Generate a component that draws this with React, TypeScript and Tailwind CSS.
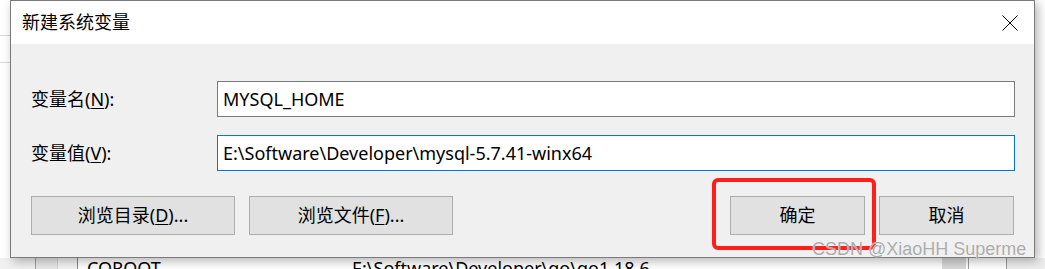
type FieldProps = {
  label: string;
  hotkey: string;
  value: string;
  focused?: boolean;
  className?: string;
};

function Field({ label, hotkey, value, focused, className }: FieldProps) {
  return (
    <div className={`flex h-[36px] items-center ${className ?? ""}`}>
      <div className="w-[186px] shrink-0">
        {label}(<u className="underline-offset-2">{hotkey}</u>):
      </div>
      <div
        className={`flex h-full flex-1 items-center border bg-white pl-[5px] ${
          focused ? "border-[#0078d7]" : "border-[#7a7a7a]"
        }`}
      >
        {value}
      </div>
    </div>
  );
}

function WinButton({ children, className }: { children: React.ReactNode; className?: string }) {
  return (
    <button
      type="button"
      className={`flex h-[39px] items-center justify-center border border-[#adadad] bg-[#e1e1e1] ${className ?? ""}`}
    >
      {children}
    </button>
  );
}

function Backdrop() {
  return (
    <>
      <div className="absolute left-0 top-[35px] h-px w-[10px] bg-[#d9d9d9]" />
      <div className="absolute left-0 top-[62px] h-px w-[10px] bg-[#d9d9d9]" />
      <div className="absolute inset-x-0 top-[258px] flex h-[11px]">
        <div className="w-[36px] border-r border-[#a0a0a0] bg-[#f0f0f0]" />
        <div className="w-[22px] border-r border-[#d4d4d4] bg-[#e9e9e9]" />
        <div className="w-[20px] border-r border-[#8a8a8a] bg-[#f4f4f4]" />
        <div className="flex flex-1 bg-white leading-none">
          <span className="w-[274px] pl-[9px] pt-[1px]">COROOT</span>
          <span className="flex-1 pt-[1px]">E:\Software\Developer\go\go1.18.6</span>
          <div className="w-[24px] bg-[#d9d9d9]" />
          <div className="ml-[2px] w-[39px] border-l border-r border-[#9a9a9a] bg-white" />
          <div className="w-[38px] bg-[#eeeeee]" />
        </div>
      </div>
    </>
  );
}

export default function App() {
  return (
    <div className="relative h-[269px] w-[1045px] overflow-hidden bg-white font-['Noto_Sans','Noto_Sans_CJK_SC',sans-serif] text-[18px] text-black">
      <Backdrop />

      <div className="absolute left-[10px] top-0 flex h-[258px] w-[1025px] flex-col border border-[#7a7a7a] shadow-[3px_3px_10px_rgba(0,0,0,0.3)]">
        <div className="flex h-[43px] items-center justify-between bg-white pl-[11px] pr-[16px]">
          <span>新建系统变量</span>
          <svg width="16" height="16" viewBox="0 0 16 16" aria-label="关闭">
            <path d="M0.5 0.5L15.5 15.5M15.5 0.5L0.5 15.5" stroke="#000" strokeWidth="1" fill="none" />
          </svg>
        </div>

        <div className="flex flex-1 flex-col bg-[#f0f0f0] pl-[20px] pr-[19px] pt-[37px]">
          <Field label="变量名" hotkey="N" value="MYSQL_HOME" />
          <Field
            label="变量值"
            hotkey="V"
            value="E:\Software\Developer\mysql-5.7.41-winx64"
            focused
            className="mt-[18px]"
          />
          <div className="mt-[25px] flex gap-[14px] pr-[1px]">
            <WinButton className="w-[204px]">
              浏览目录(<u className="underline-offset-2">D</u>)...
            </WinButton>
            <WinButton className="w-[204px]">
              浏览文件(<u className="underline-offset-2">F</u>)...
            </WinButton>
            <div className="flex-1" />
            <WinButton className="w-[135px]">确定</WinButton>
            <WinButton className="w-[135px]">取消</WinButton>
          </div>
        </div>
      </div>

      <div className="absolute left-[712px] top-[178px] h-[72px] w-[164px] rounded-[6px] border-[4px] border-[#fe1f1b]" />

      <div className="absolute left-[812px] top-[236px] font-['Liberation_Sans',sans-serif] text-[18px] text-[#ababab] [text-shadow:0_0_1px_#ffffff]">
        CSDN @XiaoHH Superme
      </div>
    </div>
  );
}
